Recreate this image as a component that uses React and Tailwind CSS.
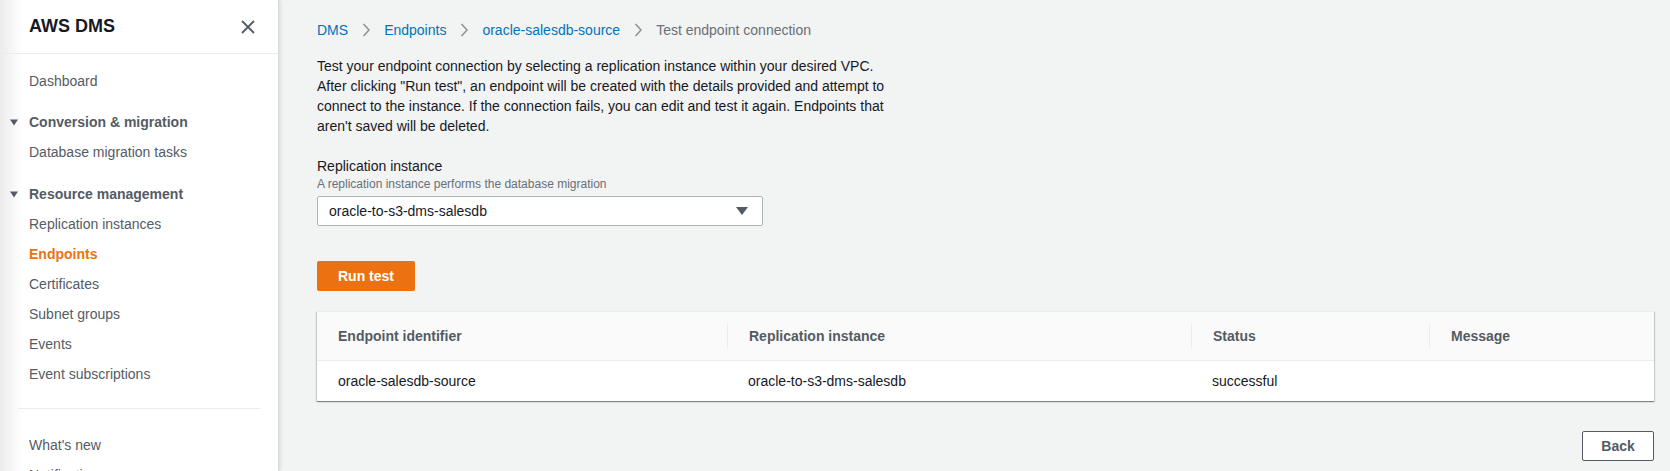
import React from 'react';

const navTop = ['Dashboard'];

const Caret = () => (
  <svg width="8" height="8" viewBox="0 0 8 8" className="absolute left-[10px] top-[11px]">
    <path d="M0 1.5 L8 1.5 L4 7.5 Z" fill="#545b64" />
  </svg>
);

const Chevron = () => (
  <svg width="10" height="16" viewBox="0 0 10 16" className="mx-[13px] shrink-0">
    <path d="M2.5 2 L8 8 L2.5 14" fill="none" stroke="#879596" strokeWidth="1.5" />
  </svg>
);

const NavItem = ({ children, active }) => (
  <a
    href="#"
    className={
      'block h-[30px] pl-[29px] leading-[30px] text-[14px] ' +
      (active ? 'font-bold text-[#ec7211]' : 'text-[#545b64]')
    }
  >
    {children}
  </a>
);

const Section = ({ title, className }) => (
  <div className={'relative h-[30px] pl-[29px] leading-[30px] text-[14px] font-bold text-[#545b64] ' + (className || '')}>
    <Caret />
    {title}
  </div>
);

const Sidebar = () => (
  <aside className="w-[279px] shrink-0 border-r border-[#d5dbdb] bg-[linear-gradient(to_right,#ebebeb,#ffffff_22px)] shadow-[1px_0_4px_rgba(0,28,36,0.12)] z-10">
    <div className="flex h-[54px] items-center justify-between border-b border-[#eaeded] pl-[29px] pr-[23px]">
      <h2 className="text-[18px] font-bold text-[#16191f]">AWS DMS</h2>
      <svg width="14" height="14" viewBox="0 0 14 14">
        <path d="M1 1 L13 13 M13 1 L1 13" stroke="#545b64" strokeWidth="1.8" />
      </svg>
    </div>
    <nav className="pt-[12px]">
      {navTop.map((n) => (
        <NavItem key={n}>{n}</NavItem>
      ))}
      <Section title="Conversion & migration" className="mt-[11px]" />
      <NavItem>Database migration tasks</NavItem>
      <Section title="Resource management" className="mt-[12px]" />
      <NavItem>Replication instances</NavItem>
      <NavItem active>Endpoints</NavItem>
      <NavItem>Certificates</NavItem>
      <NavItem>Subnet groups</NavItem>
      <NavItem>Events</NavItem>
      <NavItem>Event subscriptions</NavItem>
      <div className="mx-[18px] mt-[19px] border-t border-[#eaeded]" />
      <div className="mt-[21px]">
        <NavItem>What's new</NavItem>
        <NavItem>Notifications</NavItem>
      </div>
    </nav>
  </aside>
);

const cols = ['Endpoint identifier', 'Replication instance', 'Status', 'Message'];
const row = ['oracle-salesdb-source', 'oracle-to-s3-dms-salesdb', 'successful', ''];

const App = () => {
  return (
    <div className="flex h-[471px] w-full overflow-hidden bg-[#f2f3f3] font-['Liberation_Sans',Arial,sans-serif] text-[14px] text-[#16191f]">
      <Sidebar />
      <main className="flex-1 pl-[38px] pr-[16px] pt-[20px]">
        <div className="flex h-[20px] items-center leading-[20px]">
          <a href="#" className="text-[#0073bb]">DMS</a>
          <Chevron />
          <a href="#" className="text-[#0073bb]">Endpoints</a>
          <Chevron />
          <a href="#" className="text-[#0073bb]">oracle-salesdb-source</a>
          <Chevron />
          <span className="text-[#687078]">Test endpoint connection</span>
        </div>

        <p className="mt-[16px] leading-[20px]">
          Test your endpoint connection by selecting a replication instance within your desired VPC.
          <br />
          After clicking "Run test", an endpoint will be created with the details provided and attempt to
          <br />
          connect to the instance. If the connection fails, you can edit and test it again. Endpoints that
          <br />
          aren't saved will be deleted.
        </p>

        <div className="mt-[20px]">
          <div className="leading-[20px]">Replication instance</div>
          <div className="text-[12px] leading-[16px] text-[#687078]">
            A replication instance performs the database migration
          </div>
          <div className="mt-[4px] flex h-[30px] w-[446px] items-center justify-between rounded-[2px] border border-[#aab7b8] bg-white pl-[11px] pr-[14px]">
            <span>oracle-to-s3-dms-salesdb</span>
            <svg width="12" height="8" viewBox="0 0 12 8">
              <path d="M0 0 L12 0 L6 8 Z" fill="#545b64" />
            </svg>
          </div>
        </div>

        <button className="mt-[35px] h-[30px] w-[98px] rounded-[2px] bg-[#ec7211] font-bold text-white">
          Run test
        </button>

        <div className="mt-[20px] border-t border-[#eaeded] bg-white shadow-[0_1px_1px_0_rgba(0,28,36,0.3),1px_1px_1px_0_rgba(0,28,36,0.15),-1px_1px_1px_0_rgba(0,28,36,0.15)]">
          <div className="grid h-[49px] grid-cols-[410px_464px_238px_1fr] items-center border-b border-[#eaeded] bg-[#fafafa]">
            {cols.map((c, i) => (
              <div
                key={c}
                className={
                  'flex h-[24px] items-center pl-[21px] font-bold text-[#545b64] ' +
                  (i > 0 ? 'border-l border-[#eaeded]' : '')
                }
              >
                {c}
              </div>
            ))}
          </div>
          <div className="grid h-[40px] grid-cols-[410px_464px_238px_1fr] items-center">
            {row.map((c, i) => (
              <div key={i} className="pl-[21px]">
                {c}
              </div>
            ))}
          </div>
        </div>

        <div className="mt-[30px] flex justify-end">
          <button className="h-[30px] w-[72px] rounded-[2px] border border-[#545b64] bg-white font-bold text-[#545b64]">
            Back
          </button>
        </div>
      </main>
    </div>
  );
};

export default App;
